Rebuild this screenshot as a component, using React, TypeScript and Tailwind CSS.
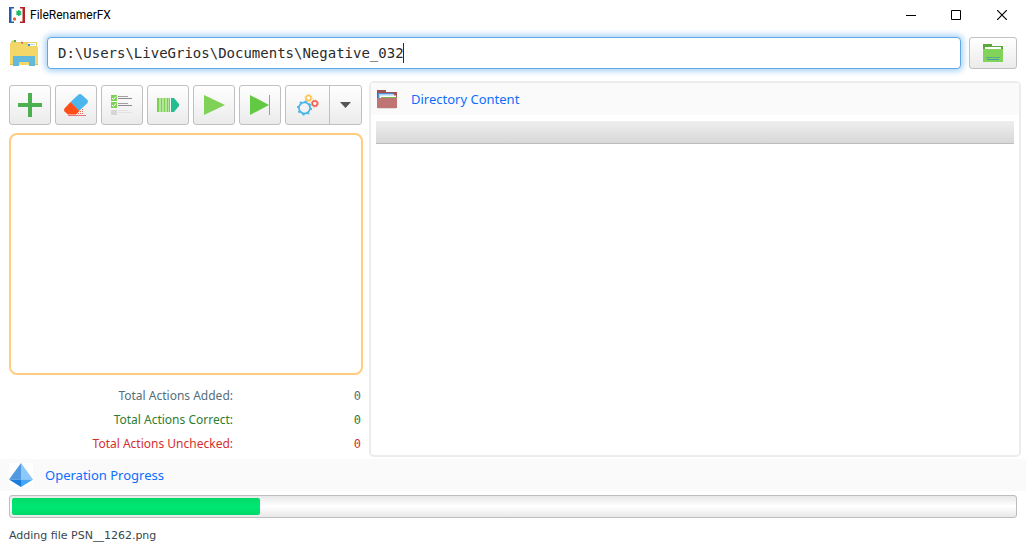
import { useState } from "react";
import type { ReactNode } from "react";

const face =
  "rounded-[3px] border border-[#c0c0c0] bg-linear-to-b from-white to-[#ebebeb] flex items-center justify-center";

function LogoIcon() {
  return (
    <svg width="16" height="16" viewBox="0 0 16 16" aria-hidden="true">
      <path d="M0 0h5v1.500H2.500v13H5V16H0z" fill="#1f5fb0" />
      <path d="M16 0h-5v1.500h2.500v13H11V16h5z" fill="#b52225" />
      <path d="M9.800 3v6M7.300 4.500l5 3M12.300 4.500l-5 3" stroke="#1fb968" strokeWidth="1.500" />
      <rect x="4" y="10.500" width="3" height="3" rx="1" fill="#ee5a24" />
    </svg>
  );
}

function ExplorerIcon() {
  return (
    <svg width="28" height="28" viewBox="0 0 28 28" aria-hidden="true">
      <path d="M1 2l3-1h7l1 2h15v9H1z" fill="#ecd060" />
      <path d="M4 1h2v2H4z" fill="#4caf50" />
      <path d="M6 1h5v2H6z" fill="#fff" />
      <path d="M11 3h2v2h-2z" fill="#c96a3a" />
      <path d="M0 4h11l2 1h4l1 3h10v18H0z" fill="#f3d768" />
      <path d="M18 4h8v3h-8z" fill="#fff" />
      <path d="M18 5h2v2h-2z" fill="#2f8fe0" />
      <path d="M20 5.500h5" stroke="#b9dcf5" />
      <path d="M3 17h22v10h-6v-4H9v4H3z" fill="#62b9dc" />
      <path d="M0 25h3v1H0zM25 25h3v1h-3z" fill="#dcb94a" />
    </svg>
  );
}

function BrowseIcon() {
  return (
    <svg width="20" height="18" viewBox="0 0 20 18" aria-hidden="true">
      <path d="M0 0h9v2h11v5H0z" fill="#5aa83c" />
      <path d="M2 3h16v2H2z" fill="#fff" />
      <path d="M0 5h20v13H0z" fill="#81d35a" />
      <path d="M3 13.500h14" stroke="#5ba98e" strokeWidth="1" />
      <path d="M4 15.500h12" stroke="#419fae" strokeWidth="1" />
    </svg>
  );
}

function PlusIcon() {
  return (
    <svg width="24" height="24" viewBox="0 0 24 24" aria-hidden="true">
      <path d="M10 0h4v10h10v4H14v10h-4V14H0v-4h10z" fill="#4caf50" />
    </svg>
  );
}

function EraserIcon() {
  return (
    <svg width="26" height="24" viewBox="0 0 26 24" aria-hidden="true">
      <path d="M7.500 9L15.500 1.500q1.500-1 3 0L24.500 7q1 1.500 0 3L16 18z" fill="#4db6ec" />
      <path d="M7.500 9L16.500 18 13 21.500H5L1.500 18.500q-1-1.500 0-3z" fill="#ff4f18" />
      <path d="M5 22.500h18" stroke="#e5737b" />
      <path d="M15 20.500h5M17 18.500h3M19 16.500h2" stroke="#f06a50" strokeDasharray="1 1" />
    </svg>
  );
}

function ChecklistIcon() {
  return (
    <svg width="22" height="20" viewBox="0 0 22 20" fill="none" aria-hidden="true">
      <path d="M0 0h6v6H0zM0 7h6v6H0z" fill="#80d058" />
      <path d="M0 15h6v5H0z" fill="#d6d6d6" />
      <path d="M1 3l1.500 1.500L5 1.500M1 10l1.500 1.500L5 8.500" stroke="#fff" />
      <path d="M7 1.500h10M7 8.500h10" stroke="#a0a0a0" />
      <path d="M7 3.500h14M7 10.500h14" stroke="#8c8c8c" />
      <path d="M7 15.500h10M7 17.500h14" stroke="#e2e2e2" />
    </svg>
  );
}

function QueueIcon() {
  return (
    <svg width="22" height="14" viewBox="0 0 22 14" aria-hidden="true">
      <path d="M0 0h13v14H0z" fill="#b3e59b" />
      <path d="M0 0h2v14H0zM4 0h1v14H4zM7 0h1v14H7zM10 0h1v14h-1zM12 0h1v14h-1z" fill="#7bd04f" />
      <path d="M14 0h3l5 6v2l-5 6h-3z" fill="#24bd92" />
    </svg>
  );
}

function PlayIcon() {
  return (
    <svg width="21" height="20" viewBox="0 0 21 20" aria-hidden="true">
      <path d="M0 0l21 10L0 20z" fill="#7fd257" />
    </svg>
  );
}

function StepIcon() {
  return (
    <svg width="20" height="20" viewBox="0 0 20 20" aria-hidden="true">
      <path d="M0 0l19 10L0 20z" fill="#62ca42" />
      <path d="M19 0h1v20h-1z" fill="#62ca42" />
    </svg>
  );
}

function GearsIcon() {
  return (
    <svg width="22" height="22" viewBox="0 0 22 22" fill="none" aria-hidden="true">
      <circle cx="7.500" cy="14" r="5.600" stroke="#45b4e8" strokeWidth="1.700" />
      <circle cx="7.500" cy="14" r="6.700" stroke="#45b4e8" strokeWidth="1.600" strokeDasharray="2 3.260" />
      <circle cx="11.500" cy="4" r="2.500" stroke="#fbc34a" strokeWidth="1.400" />
      <circle cx="11.500" cy="4" r="3.500" stroke="#fbc34a" strokeWidth="1" strokeDasharray="1.300 1.450" />
      <circle cx="17.800" cy="9.500" r="2.500" stroke="#fa604c" strokeWidth="1.400" />
      <circle cx="17.800" cy="9.500" r="3.500" stroke="#fa604c" strokeWidth="1" strokeDasharray="1.300 1.450" />
    </svg>
  );
}

function DirectoryIcon() {
  return (
    <svg width="20" height="19" viewBox="0 0 20 19" aria-hidden="true">
      <path d="M0 0h9v2h11v8H0z" fill="#a05252" />
      <path d="M1 3h15v5H1z" fill="#4d8fd2" />
      <path d="M2 4h15v4H2z" fill="#a9d0f5" />
      <path d="M3 5.500h16V8H3z" fill="#fff" />
      <path d="M4 7h16v1H4z" fill="#7db64c" />
      <path d="M0 8h20v10H0z" fill="#c07575" />
      <path d="M1 18h18v1H1z" fill="#e6dede" />
    </svg>
  );
}

function PyramidIcon() {
  return (
    <svg width="24" height="24" viewBox="0 0 24 24" aria-hidden="true">
      <path d="M0 0h24v24H0z" fill="#fff" />
      <path d="M12 0v16.500H0z" fill="#5199e0" />
      <path d="M12 0l12 16.500H12z" fill="#8cc8fa" />
      <path d="M0 16.500h12V24z" fill="#1b7ddb" />
      <path d="M24 16.500H12V24z" fill="#42a5f5" />
    </svg>
  );
}

function ToolButton({ label, children }: { label: string; children: ReactNode }) {
  return (
    <button type="button" aria-label={label} className={`${face} h-10 w-[42px]`}>
      {children}
    </button>
  );
}

const totals = [
  { label: "Total Actions Added:", value: 0, tone: "text-[#546e7a]" },
  { label: "Total Actions Correct:", value: 0, tone: "text-[#2e7d32]" },
  { label: "Total Actions Unchecked:", value: 0, tone: "text-[#d32f2f]" },
];

export default function App() {
  const [path, setPath] = useState("D:\\Users\\LiveGrios\\Documents\\Negative_032");
  const progress = 24.8;

  return (
    <div className="flex min-h-screen flex-col bg-white font-['Noto_Sans',sans-serif] text-[#37474f]">
      <header className="flex h-[30px] items-center justify-between pr-px pl-[9px]">
        <div className="flex items-center gap-[5px]">
          <LogoIcon />
          <h1 className="font-[Roboto,sans-serif] text-xs text-black">FileRenamerFX</h1>
        </div>
        <div className="flex">
          <button type="button" aria-label="Minimize" className="flex h-[30px] w-[45px] items-center justify-center">
            <svg width="10" height="10" viewBox="0 0 10 10"><path d="M0 5.500h10" stroke="#000" /></svg>
          </button>
          <button type="button" aria-label="Maximize" className="flex h-[30px] w-[45px] items-center justify-center">
            <svg width="10" height="10" viewBox="0 0 10 10"><path d="M.5.5h9v9h-9z" stroke="#000" fill="none" /></svg>
          </button>
          <button type="button" aria-label="Close" className="flex h-[30px] w-[47px] items-center justify-center">
            <svg width="10" height="10" viewBox="0 0 10 10"><path d="M0 0l10 10M10 0L0 10" stroke="#000" strokeWidth="1.200" /></svg>
          </button>
        </div>
      </header>

      <div className="flex items-center gap-2 pt-[7px] pr-[9px] pl-[10px]">
        <ExplorerIcon />
        <div className="relative ml-px flex-1 font-['DejaVu_Sans_Mono',monospace] text-sm">
          <textarea
            rows={1}
            wrap="off"
            aria-label="Directory path"
            value={path}
            onChange={(e) => setPath(e.target.value)}
            className="block h-8 w-full resize-none overflow-hidden rounded-[4px] border border-[#5ea9e8] bg-white px-[10px] py-[5px] leading-5 text-[#2b2b2b] shadow-[0_0_6px_2px_#a5cff5] outline-none"
          />
          <span
            className="absolute top-[6px] ml-[10px] h-5 w-px bg-[#2b2b2b]"
            style={{ left: `${path.length}ch` }}
          />
        </div>
        <button type="button" aria-label="Browse" className={`${face} h-8 w-12`}>
          <BrowseIcon />
        </button>
      </div>

      <main className="flex flex-1 gap-[6px] pt-3 pr-[5px] pl-[9px]">
        <section className="flex w-[354px] flex-col pt-1">
          <div className="flex gap-1">
            <ToolButton label="Add action"><PlusIcon /></ToolButton>
            <ToolButton label="Clear actions"><EraserIcon /></ToolButton>
            <ToolButton label="Check actions"><ChecklistIcon /></ToolButton>
            <ToolButton label="Queue actions"><QueueIcon /></ToolButton>
            <ToolButton label="Run"><PlayIcon /></ToolButton>
            <ToolButton label="Run to end"><StepIcon /></ToolButton>
            <div className="flex h-10 w-[77px] rounded-[3px] border border-[#c0c0c0] bg-linear-to-b from-white to-[#ebebeb]">
              <button type="button" aria-label="Settings" className="flex flex-1 items-center justify-center border-r border-[#c0c0c0]">
                <GearsIcon />
              </button>
              <button type="button" aria-label="More settings" className="flex w-[31px] items-center justify-center">
                <svg width="11" height="6" viewBox="0 0 11 6"><path d="M0 0h11L5.500 6z" fill="#555" /></svg>
              </button>
            </div>
          </div>
          <div className="mt-2 min-h-[200px] flex-1 rounded-[8px] border-2 border-[#ffcc80] bg-white" />
          <dl className="mt-[9px] mb-px text-xs">
            {totals.map((t) => (
              <div key={t.label} className={`flex h-6 items-center pr-[2px] ${t.tone}`}>
                <dt className="w-[224px] text-right">{t.label}</dt>
                <dd className="flex-1 text-right font-['DejaVu_Sans_Mono',monospace]">{t.value}</dd>
              </div>
            ))}
          </dl>
        </section>

        <section className="flex flex-1 flex-col rounded-[5px] border-2 border-[#ececec]">
          <div className="flex h-8 items-center gap-[14px] bg-[#fafafa] pl-[6px]">
            <DirectoryIcon />
            <h2 className="pt-[2px] text-[13px] text-[#0d6efd]">Directory Content</h2>
          </div>
          <div className="mx-[5px] mt-[6px] h-[23px] border-b border-[#bdbdbd] bg-linear-to-b from-[#eeeeee] to-[#d8d8d8]" />
        </section>
      </main>

      <footer className="pt-[2px]">
        <div className="flex h-8 items-center gap-3 bg-[#fafafa] pl-[9px]">
          <PyramidIcon />
          <h2 className="pt-[2px] text-[13px] text-[#0d6efd]">Operation Progress</h2>
        </div>
        <div className="px-[9px] pt-1">
          <div
            role="progressbar"
            aria-label="Operation progress"
            aria-valuenow={progress}
            className="h-[23px] rounded-[3px] border border-[#bdbdbd] bg-linear-to-b from-[#e8e8e8] via-white to-[#e8e8e8] p-[2px]"
          >
            <div
              className="h-full rounded-[2px] bg-linear-to-b from-[#00d968] via-[#00e874] to-[#00d968]"
              style={{ width: `${progress}%` }}
            />
          </div>
          <p className="flex h-[34px] items-center pt-[2px] font-['DejaVu_Sans',sans-serif] text-[11px]">
            Adding file PSN__1262.png
          </p>
        </div>
      </footer>
    </div>
  );
}
